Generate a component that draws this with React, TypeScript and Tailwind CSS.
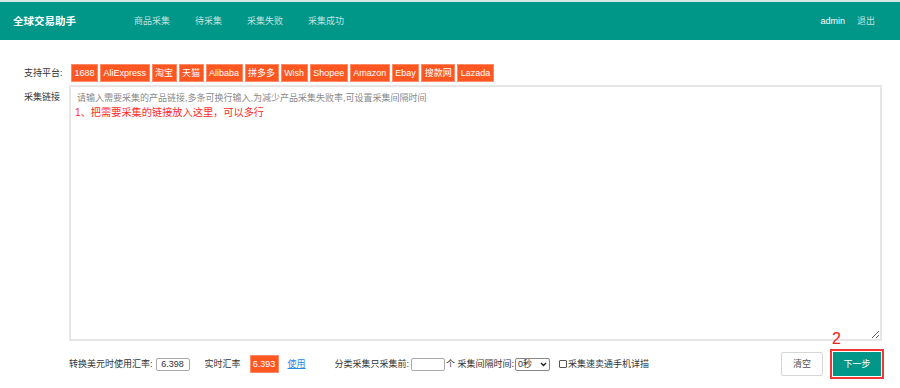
import React from "react";

const tags = ["1688", "AliExpress", "淘宝", "天猫", "Alibaba", "拼多多", "Wish", "Shopee", "Amazon", "Ebay", "搜款网", "Lazada"];

export default function App() {
  const font = { fontFamily: '"Liberation Sans", "Noto Sans CJK SC", sans-serif' } as React.CSSProperties;
  return (
    <div className="w-[900px] h-[388px] bg-white overflow-hidden text-[#333]" style={font}>
      <div className="h-[2px] bg-[#d5e8e5]" />
      <div className="h-[38px] bg-[#009688] flex items-center pl-[13px] pr-[25px]">
        <div className="text-white font-bold text-[10.5px] leading-none">全球交易助手</div>
        <div className="flex gap-[25px] ml-[58px] text-[9px] text-white/75 leading-none">
          <span>商品采集</span>
          <span>待采集</span>
          <span>采集失败</span>
          <span>采集成功</span>
        </div>
        <div className="ml-auto flex items-center gap-[12px] text-[9px] leading-none">
          <span className="text-white">admin</span>
          <span className="text-white/75">退出</span>
        </div>
      </div>

      <div className="pl-[24px] pt-[24px]">
        <div className="flex items-center h-[18px]">
          <div className="w-[47px] text-[9px] leading-none">支持平台:</div>
          <div className="flex gap-[2px]">
            {tags.map((t) => (
              <span
                key={t}
                className="h-[18px] px-[2.5px] border border-[#ff8a65] bg-[#ff5722] text-white text-[9px] leading-[16px] whitespace-nowrap"
              >
                {t}
              </span>
            ))}
          </div>
        </div>

        <div className="flex mt-[3px]">
          <div className="w-[45px] text-[9px] leading-none pt-[8px]">采集链接</div>
          <div className="relative">
            <textarea
              className="block w-[813px] h-[256px] border-2 border-[#e6e6e6] pl-[6px] pt-[5px] text-[9px] leading-[12px] outline-none placeholder:text-[#8a8a8a]"
              placeholder="请输入需要采集的产品链接,多条可换行输入,为减少产品采集失败率,可设置采集间隔时间"
            />
            <div className="absolute left-[6px] top-[23px] text-[10.2px] leading-none text-[#ff2a2a] whitespace-nowrap">
              1、把需要采集的链接放入这里，可以多行
            </div>
          </div>
        </div>

        <div className="flex items-center ml-[45px] mt-[10px] h-[26px] text-[9px] leading-none relative">
          <span>转换美元时使用汇率:</span>
          <span className="ml-[3px] w-[34px] h-[13px] border border-[#aaa] rounded-[2px] flex items-center justify-center text-[#333]">6.398</span>
          <span className="ml-[15px]">实时汇率</span>
          <span className="ml-[9px] w-[29px] h-[18px] bg-[#ff5722] border border-[#ff8a65] text-white flex items-center justify-center">6.393</span>
          <span className="ml-[9px] text-[#1e88e5] underline">使用</span>
          <span className="ml-[29px]">分类采集只采集前:</span>
          <span className="ml-[2px] w-[34px] h-[13px] border border-[#aaa] rounded-[2px]" />
          <span className="ml-[1px]">个 采集间隔时间:</span>
          <span className="ml-[1px] w-[35px] h-[13px] border border-[#888] rounded-[2px] flex items-center justify-between px-[2px]">
            <span>0秒</span>
            <svg width="7" height="5" viewBox="0 0 7 5"><path d="M1 1 L3.5 3.5 L6 1" stroke="#222" strokeWidth="1.4" fill="none" /></svg>
          </span>
          <span className="ml-[9px] w-[8px] h-[8px] border border-[#555] rounded-[1px]" />
          <span className="ml-[1px]">采集速卖通手机详描</span>

          <button className="ml-auto w-[42px] h-[24px] border border-[#d6d6d6] bg-white rounded-[2px] text-[9px] text-[#555]">清空</button>
          <div className="ml-[7px] mr-[16px] relative border-2 border-[#f03838] p-[1px]">
            <div className="absolute -top-[20px] left-[0px] text-[16px] leading-none text-[#f02020]">2</div>
            <button className="block w-[48px] h-[24px] bg-[#009688] text-white text-[9px]">下一步</button>
          </div>
        </div>
      </div>
    </div>
  );
}
